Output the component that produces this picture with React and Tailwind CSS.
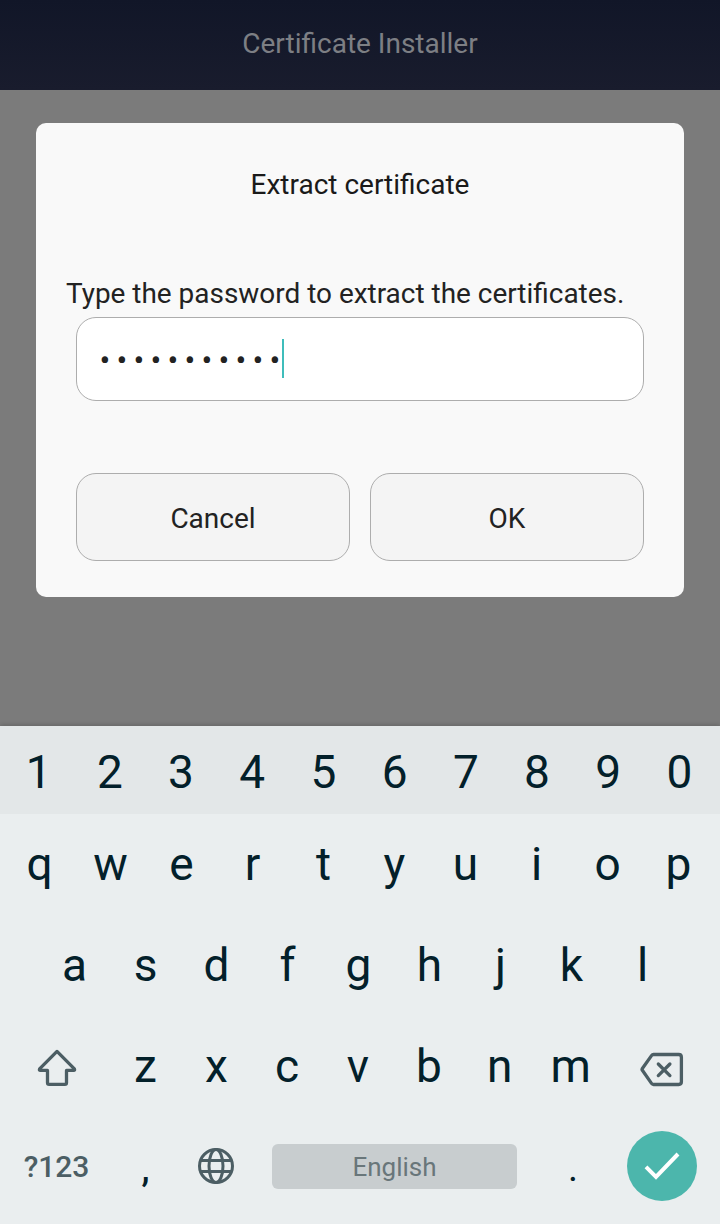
const digits = "1234567890".split("");
const topRow = "qwertyuiop".split("");
const homeRow = "asdfghjkl".split("");
const bottomRow = "zxcvbnm".split("");

function Key({ children }) {
  return (
    <button className="flex min-w-0 flex-1 items-center justify-center">
      {children}
    </button>
  );
}

function ShiftIcon() {
  return (
    <svg width="42" height="40" viewBox="0 0 42 40" fill="none" stroke="#4c5e64" strokeWidth="3.3" strokeLinejoin="round">
      <path d="M21 3.400 3.600 20.800q-.7 1.600.8 1.600h7.100v12.400q0 1.600 1.600 1.600h15.800q1.600 0 1.600-1.600V22.400h7.100q1.500 0 .8-1.600Z" />
    </svg>
  );
}

function BackspaceIcon() {
  return (
    <svg width="44" height="36" viewBox="0 0 44 36" fill="none" stroke="#4c5e64" strokeWidth="3.3" strokeLinejoin="round" strokeLinecap="round">
      <path d="M13.500 2.500h25.200q2.700 0 2.700 2.700v24.600q0 2.700-2.700 2.700H13.500q-1.200 0-2-1.100L2.200 18q-.4-.6 0-1.200L11.500 3.600q.8-1.100 2-1.100Z" />
      <path d="m18.300 12 11.600 11.600m0-11.600-11.600 11.600" />
    </svg>
  );
}

function GlobeIcon() {
  return (
    <svg width="38" height="38" viewBox="0 0 38 38" fill="none" stroke="#4c5e64" strokeWidth="3">
      <circle cx="19" cy="19" r="16.500" />
      <ellipse cx="19" cy="19" rx="7" ry="16.500" />
      <path d="M3.500 13.500h31M3.500 24.500h31" />
    </svg>
  );
}

export default function App() {
  return (
    <div className="flex h-[1224px] w-[720px] flex-col overflow-hidden bg-[#7b7b7b] font-['Roboto',sans-serif] text-[28px] leading-none text-[#222222]">
      <header className="flex h-[90px] items-center justify-center bg-linear-to-b from-[#111628] to-[#191c2d] pb-[3px] text-[#7d7f84]">
        <h1>Certificate Installer</h1>
      </header>

      <main className="flex h-[636px] flex-col px-9 pt-[33px]">
        <section className="flex h-[474px] flex-col rounded-[10px] bg-[#f9f9f9]">
          <h2 className="pt-[48px] text-center text-[#1a1a1a]">Extract certificate</h2>
          <p className="pt-[81px] pl-[30px] text-[27.95px] leading-[28px] whitespace-nowrap">Type the password to extract the certificates.</p>
          <div className="mx-10 mt-[9px] flex h-[84px] items-center rounded-[20px] border border-[#adadad] bg-white pl-[19px]">
            <div className="flex w-[186px] pt-px pl-[0.5px] text-[32px]">
              {Array.from({ length: 11 }, (_, i) => (
                <span key={i} className="w-[17px] shrink-0 text-center">•</span>
              ))}
            </div>
            <span className="-mt-px h-[39px] w-[2px] bg-[#3fbdbb]" />
          </div>
          <div className="mx-10 mt-[72px] flex h-[88px] gap-5">
            <button className="flex-1 rounded-[20px] border border-[#adadad] bg-[#f4f4f4] pt-[3px]">Cancel</button>
            <button className="flex-1 rounded-[20px] border border-[#adadad] bg-[#f4f4f4] pt-[3px]">OK</button>
          </div>
        </section>
      </main>

      <div className="flex flex-1 flex-col bg-[#eaeeef] text-[46px] text-[#03202a] shadow-[0_-1px_5px_rgba(0,0,0,0.2)]">
        <div className="flex h-[88px] bg-[#e3e7e8] pt-[3px] pr-[5px] pl-[3px]">
          {digits.map((k) => <Key key={k}>{k}</Key>)}
        </div>
        <div className="flex h-[101px] pr-[6px] pb-px pl-1">
          {topRow.map((k) => <Key key={k}>{k}</Key>)}
        </div>
        <div className="flex h-[101px] pr-[42px] pb-px pl-[39px]">
          {homeRow.map((k) => <Key key={k}>{k}</Key>)}
        </div>
        <div className="flex h-[101px]">
          <button className="flex w-[110px] items-center pt-[3px] pl-9"><ShiftIcon /></button>
          <div className="flex w-[496px] pb-[2px]">
            {bottomRow.map((k) => <Key key={k}>{k}</Key>)}
          </div>
          <button className="flex flex-1 items-center pt-[6px] pl-[34px]"><BackspaceIcon /></button>
        </div>
        <div className="flex h-[99px] items-center">
          <button className="w-[113px] pt-px text-[30px] font-medium text-[#4c5e64]">?123</button>
          <button className="h-full w-[65px] pt-[5px] text-[36px] font-medium">,</button>
          <button className="flex w-[94px] justify-center pr-[18px] pb-[2px]"><GlobeIcon /></button>
          <button className="h-[45px] w-[245px] rounded-[6px] bg-[#c8cdcf] text-[26px] text-[#69767a]">English</button>
          <button className="h-full w-[110px] pt-[3px] pl-[2px] text-[38px]">.</button>
          <button className="-mt-[2px] flex size-[70px] items-center justify-center rounded-full bg-[#4cb6ac]">
            <svg width="38" height="30" viewBox="0 0 38 30" fill="none" stroke="white" strokeWidth="4">
              <path d="m3 15.800 10 10L35 3" />
            </svg>
          </button>
        </div>
      </div>
    </div>
  );
}
